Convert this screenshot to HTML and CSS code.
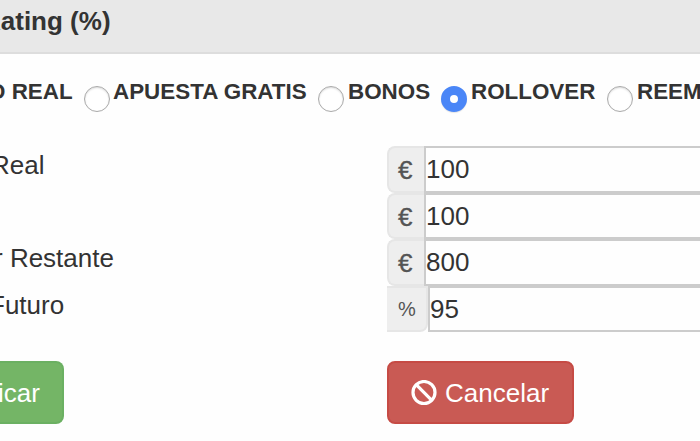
FILE: index.html
```
<!DOCTYPE html>
<html lang="es">
<head>
    <meta charset="UTF-8">
    <meta name="viewport" content="width=device-width, initial-scale=1.0">
    <title>Rating (%)</title>
    <link rel="stylesheet" href="styles.css">
</head>
<body>
    <header><span>Rating (%)</span></header>

    <form>
        <div class="types">
            <label class="first">O REAL</label>
            <input type="radio" name="type" id="free"><label class="free" for="free">APUESTA GRATIS</label>
            <input type="radio" name="type" id="bonus"><label class="bonus" for="bonus">BONOS</label>
            <input type="radio" name="type" id="rollover" checked><label class="rollover" for="rollover">ROLLOVER</label>
            <input type="radio" name="type" id="refund"><label for="refund">REEM</label>
        </div>

        <div class="fields">
            <div class="row">
                <label class="name real">Real</label>
                <span class="addon">€</span>
                <input type="text" value="100">
            </div>
            <div class="row">
                <label class="name"></label>
                <span class="addon">€</span>
                <input type="text" value="100">
            </div>
            <div class="row">
                <label class="name rest">r Restante</label>
                <span class="addon">€</span>
                <input type="text" value="800">
            </div>
            <div class="row">
                <label class="name future">Futuro</label>
                <span class="addon percent">%</span>
                <input type="text" value="95">
            </div>
        </div>

        <div class="buttons">
            <button type="button" class="success">icar</button>
            <button type="button" class="danger">
                <svg width="26" height="26" viewBox="0 0 26 26" fill="none" stroke="#fff" stroke-width="3.2">
                    <circle cx="13" cy="12.5" r="11"/>
                    <path d="M5.2 4.7L20.8 20.3"/>
                </svg>
                <span>Cancelar</span>
            </button>
        </div>
    </form>
</body>
</html>
```
FILE: styles.css
```
body {
    font-family: "Liberation Sans", Arial, sans-serif;
    font-size: 26px;
    background-color: #fefefe;
    margin: 0;
    color: #333;
    overflow: hidden;
}
header {
    box-sizing: border-box;
    height: 54px;
    background-color: #e8e8e8;
    border-bottom: 2px solid #ddd;
    font-weight: bold;
    line-height: 30px;
    padding-top: 6px;
}
header span {
    display: block;
    margin-left: -18px;
}
.types {
    display: flex;
    height: 92px;
    box-sizing: border-box;
    padding-top: 25px;
    font-size: 22.4px;
    font-weight: bold;
    line-height: 26px;
    white-space: nowrap;
}
.types label {
    flex: none;
}
.types .first {
    width: 84px;
    text-indent: -12px;
}
.types .free {
    width: 204px;
}
.types .bonus {
    width: 93px;
}
.types .rollover {
    width: 136px;
}
.types input {
    appearance: none;
    flex: none;
    box-sizing: border-box;
    width: 26px;
    height: 26px;
    margin: 7px 4px 0 0;
    border: 1px solid #aaa;
    border-radius: 50%;
    background: white;
    box-shadow: inset 0 1px 2px rgba(0, 0, 0, 0.15);
}
.types input:checked {
    border: 9px solid #4a86f7;
    box-shadow: 0 1px 1px rgba(0, 0, 0, 0.1);
}
.types .free {
    text-indent: -1px;
}
.fields {
    display: grid;
    grid-template-rows: 47px 46px 47px 46px;
}
.row {
    display: flex;
}
.name {
    width: 387px;
    flex: none;
    line-height: 30px;
    padding-top: 4px;
    box-sizing: border-box;
    white-space: nowrap;
}
.real {
    text-indent: -9px;
}
.rest {
    text-indent: -6px;
}
.future {
    text-indent: -11px;
}
.addon {
    box-sizing: border-box;
    width: 37px;
    flex: none;
    border: 2px solid #e6e6e6;
    border-right: none;
    border-radius: 8px 0 0 8px;
    background-color: #eee;
    color: #555;
    line-height: 44px;
    padding-left: 9px;
    -webkit-text-stroke: 0.3px #555;
}
.percent {
    width: 41px;
    border-right: 2px solid #e6e6e6;
    border-left: none;
    border-radius: 0 0 8px 0;
    padding-left: 11px;
    font-size: 20px;
    line-height: 43px;
    -webkit-text-stroke: 0;
}
.row input {
    flex: 1;
    min-width: 0;
    box-sizing: border-box;
    border: 2px solid #ccc;
    border-right: none;
    padding: 0;
    margin: 0;
    background: #fefefe;
    color: #333;
    font: inherit;
}
.buttons {
    display: flex;
    padding-top: 29px;
}
button {
    box-sizing: border-box;
    height: 63px;
    border-radius: 8px;
    color: white;
    font: inherit;
    display: flex;
    align-items: center;
    padding: 2px 0 0;
}
.success {
    width: 64px;
    border: 2px solid #6bb062;
    border-left: none;
    border-radius: 0 8px 8px 0;
    background-color: #74b566;
    margin-right: 323px;
    text-indent: -2px;
}
.danger {
    width: 187px;
    border: 2px solid #c64b45;
    background-color: #c95a54;
    padding-left: 22px;
    gap: 8px;
}
.danger svg {
    margin-top: -2px;
}
```
